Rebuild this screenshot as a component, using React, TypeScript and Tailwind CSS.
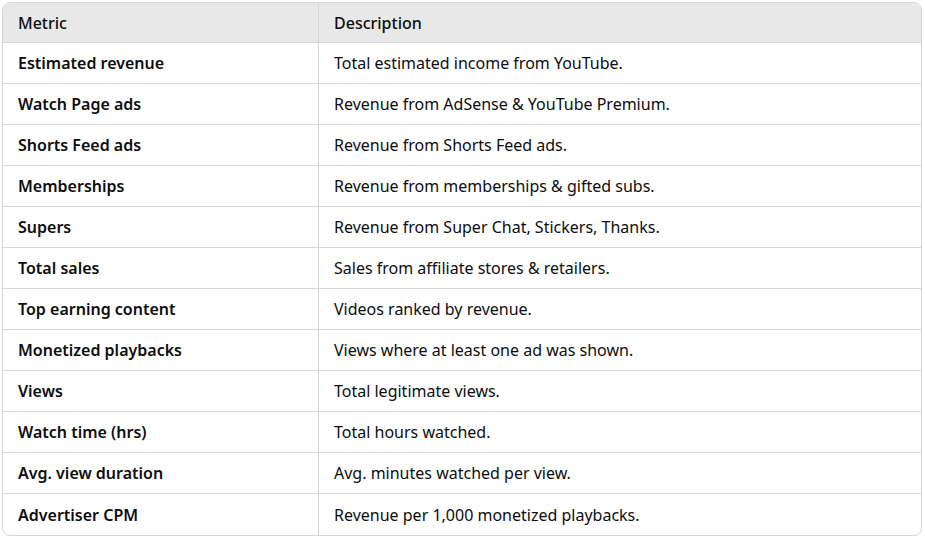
const rows: [string, string][] = [
  ["Estimated revenue", "Total estimated income from YouTube."],
  ["Watch Page ads", "Revenue from AdSense & YouTube Premium."],
  ["Shorts Feed ads", "Revenue from Shorts Feed ads."],
  ["Memberships", "Revenue from memberships & gifted subs."],
  ["Supers", "Revenue from Super Chat, Stickers, Thanks."],
  ["Total sales", "Sales from affiliate stores & retailers."],
  ["Top earning content", "Videos ranked by revenue."],
  ["Monetized playbacks", "Views where at least one ad was shown."],
  ["Views", "Total legitimate views."],
  ["Watch time (hrs)", "Total hours watched."],
  ["Avg. view duration", "Avg. minutes watched per view."],
  ["Advertiser CPM", "Revenue per 1,000 monetized playbacks."],
];

export default function App() {
  return (
    <div className="w-[925px] h-[538px] bg-white pt-[2px] pl-[2px]" style={{ fontFamily: '"Noto Sans", "Open Sans", sans-serif' }}>
      <div className="w-[920px] border border-[#d6d6d6] rounded-[8px] overflow-hidden text-[16px] text-[#0d0d0d]">
        <div className="flex h-[40px] bg-[#e8e8e8] border-b border-[#d6d6d6] items-center">
          <div className="w-[316px] h-full flex items-center pl-[15px] border-r border-[#d6d6d6] font-medium">Metric</div>
          <div className="flex-1 pl-[15px] font-medium">Description</div>
        </div>
        {rows.map(([m, d], i) => (
          <div key={m} className={`flex h-[41px] items-center ${i < rows.length - 1 ? "border-b border-[#d9d9d9]" : ""}`}>
            <div className="w-[316px] h-full flex items-center pl-[15px] border-r border-[#d6d6d6] font-semibold">{m}</div>
            <div className="flex-1 pl-[15px]">{d}</div>
          </div>
        ))}
      </div>
    </div>
  );
}
